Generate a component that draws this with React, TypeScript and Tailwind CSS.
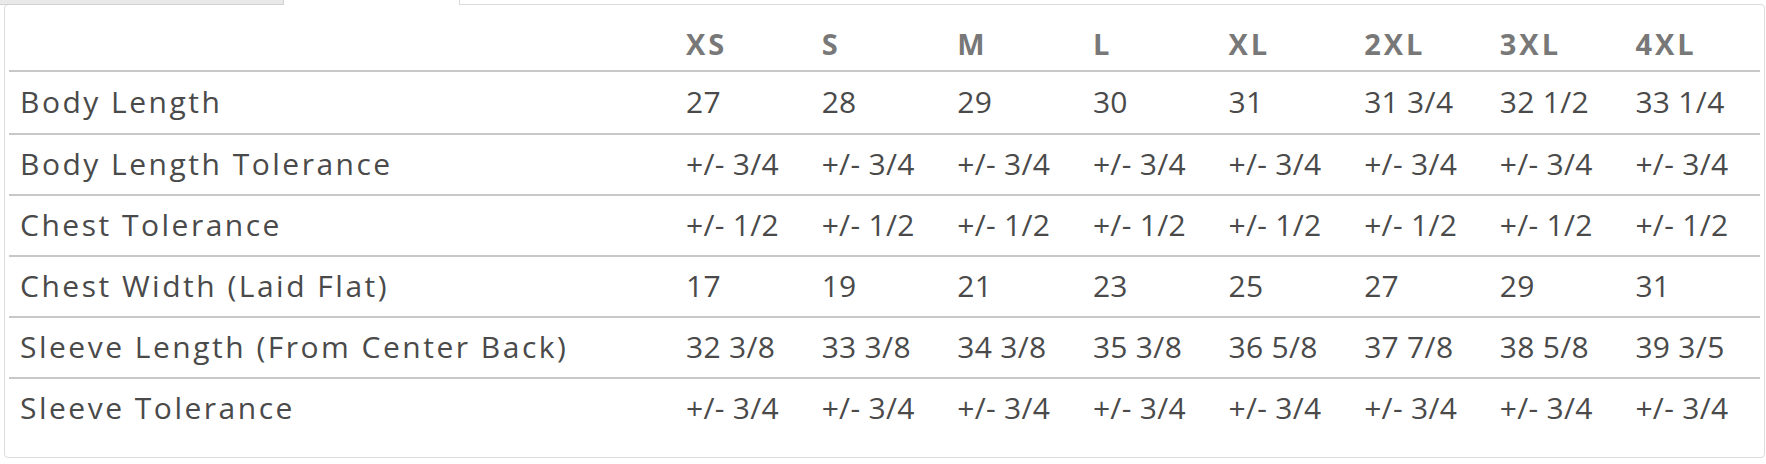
import React from "react";

const sizes = ["XS", "S", "M", "L", "XL", "2XL", "3XL", "4XL"];
const rep = (v: string) => Array(8).fill(v) as string[];
const rows: [string, string[]][] = [
  ["Body Length", ["27", "28", "29", "30", "31", "31 3/4", "32 1/2", "33 1/4"]],
  ["Body Length Tolerance", rep("+/- 3/4")],
  ["Chest Tolerance", rep("+/- 1/2")],
  ["Chest Width (Laid Flat)", ["17", "19", "21", "23", "25", "27", "29", "31"]],
  [
    "Sleeve Length (From Center Back)",
    ["32 3/8", "33 3/8", "34 3/8", "35 3/8", "36 5/8", "37 7/8", "38 5/8", "39 3/5"],
  ],
  ["Sleeve Tolerance", rep("+/- 3/4")],
];

export default function App() {
  return (
    <div
      className="w-[1766px] h-[464px] bg-white overflow-hidden"
      style={{ fontFamily: '"Open Sans", "Liberation Sans", sans-serif' }}
    >
      <div className="relative z-10 flex h-[5px] -mb-px">
        <div className="w-[284px] bg-[#e9e9e9] border-r border-b border-[#d2d2d2]" />
        <div className="w-[175px] bg-white" />
        <div className="flex-1 border-l border-[#d8d8d8]" />
      </div>
      <div className="ml-[4px] w-[1761px] h-[454px] border border-[#dcdcdc] rounded-[4px] px-[4px] pb-[18px]">
        <div className="w-[1751px]">
          <div className="grid grid-cols-[666px_repeat(8,1fr)] h-[67px] border-b-2 border-[#c8c8c8] items-end pb-[12px]">
            <div />
            {sizes.map((s) => (
              <div
                key={s}
                className="pl-[11px] text-[29px] leading-none font-bold tracking-[3px] text-[#787878]"
              >
                {s}
              </div>
            ))}
          </div>
          {rows.map(([label, vals], i) => (
            <div
              key={label}
              className={
                "grid grid-cols-[666px_repeat(8,1fr)] h-[61px] items-center text-[30px] leading-none text-[#4a4a4a] " +
                (i > 0 ? "border-t-2 border-[#c8c8c8]" : "")
              }
            >
              <div className="pl-[11px] pb-[2px] whitespace-nowrap tracking-[2.5px]">{label}</div>
              {vals.map((v, j) => (
                <div key={j} className="pl-[11px] pb-[2px] whitespace-nowrap tracking-[0.3px]">
                  {v}
                </div>
              ))}
            </div>
          ))}
        </div>
      </div>
    </div>
  );
}
